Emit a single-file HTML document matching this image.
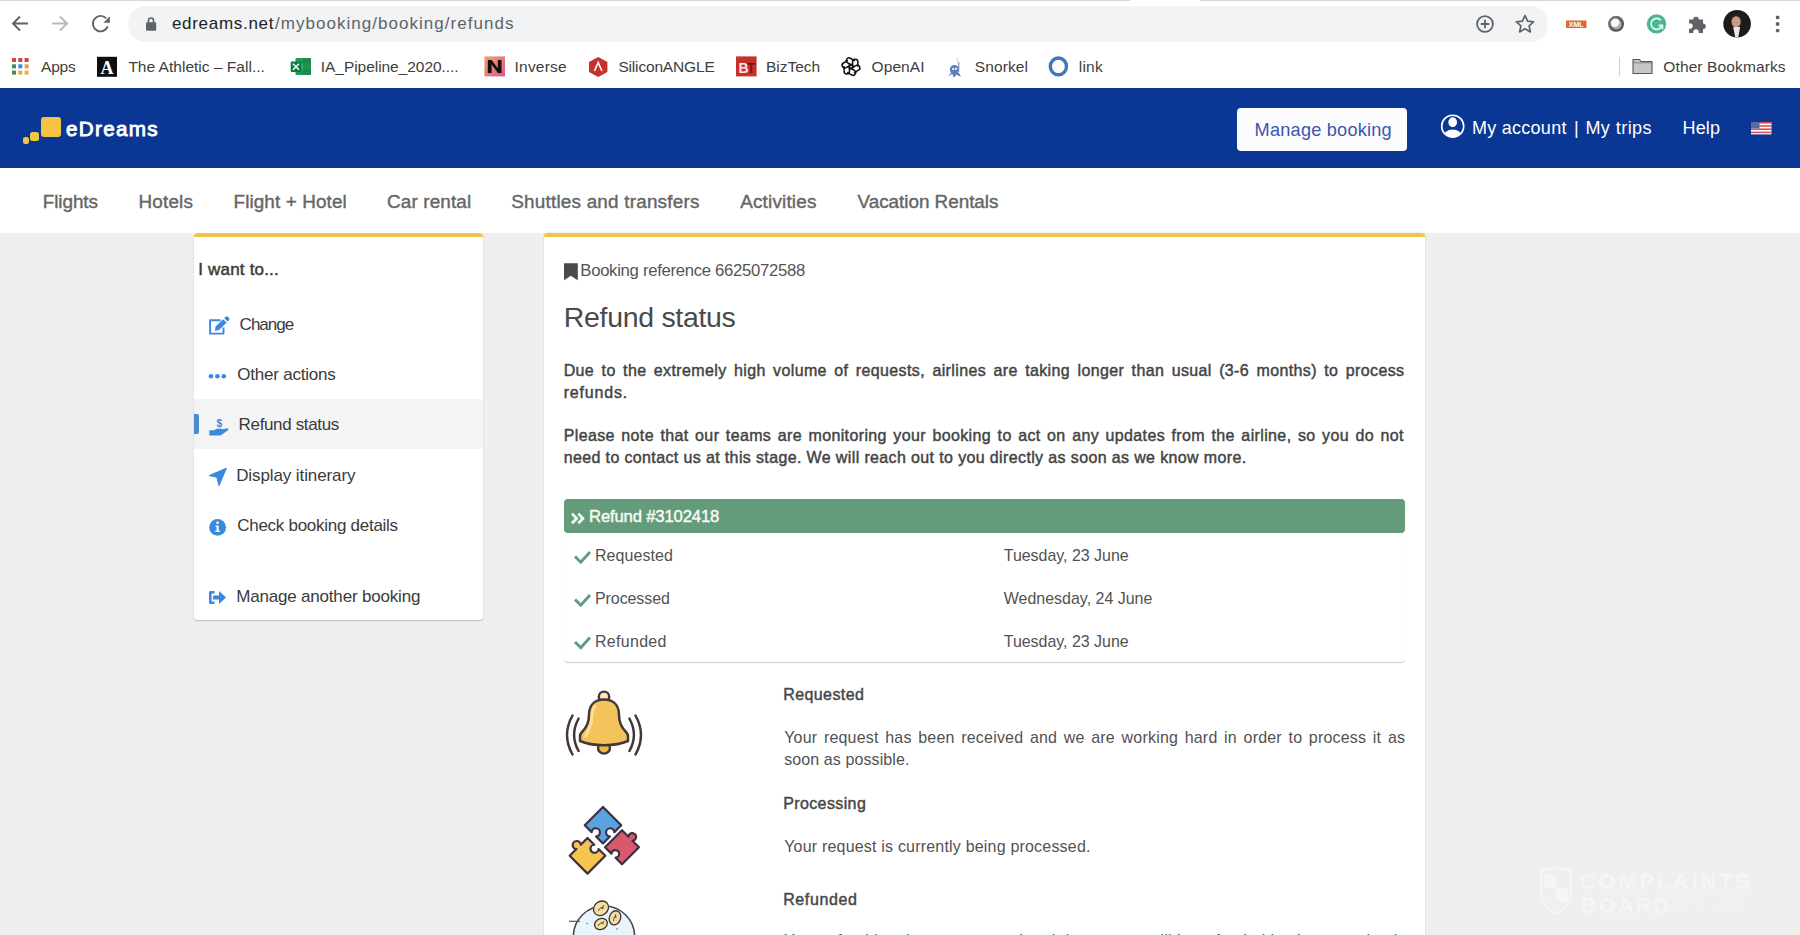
<!DOCTYPE html>
<html><head><meta charset="utf-8"><title>eDreams - Refund status</title>
<style>
html,body{margin:0;padding:0}
body{width:1800px;height:935px;overflow:hidden;position:relative;background:#efefef;font-family:"Liberation Sans",sans-serif}
.a{position:absolute}
.t{position:absolute;white-space:nowrap;font-family:"Liberation Sans",sans-serif}
svg{position:absolute;overflow:visible}
</style></head><body>
<!-- chrome toolbar -->
<div class="a" style="left:0;top:0;width:1800px;height:88px;background:#fff"></div>
<div class="a" style="left:0;top:0;width:1130px;height:1px;background:#d6d6d6"></div>
<div class="a" style="left:1200px;top:0;width:600px;height:1px;background:#d6d6d6"></div>
<div class="a" style="left:128px;top:6px;width:1420px;height:36px;border-radius:18px;background:#f1f3f4"></div>
<svg style="left:0;top:0" width="1800" height="88" viewBox="0 0 1800 88">
 <g fill="none" stroke="#5f6368" stroke-width="1.9" stroke-linecap="butt">
  <path d="M13 23.5H28M20 16.5L13 23.5L20 30.5"/>
  <path d="M52 23.5H67M60 16.5L67 23.5L60 30.5" stroke="#b6b9bc"/>
  <path d="M107.8 26.4A7.7 7.7 0 1 1 106.2 18.3"/>
 </g>
 <path d="M103.4 22.7L109.8 22.7L109.8 16.2Z" fill="#5f6368"/>
 <!-- lock -->
 <path d="M148.5 23V20.5A2.5 2.5 0 0 1 153.5 20.5V23" fill="none" stroke="#5f6368" stroke-width="1.6"/>
 <rect x="146" y="22.2" width="10.2" height="8.5" rx="1.3" fill="#5f6368"/>
 <!-- plus circle -->
 <circle cx="1485" cy="24" r="7.9" fill="none" stroke="#5f6368" stroke-width="1.8"/>
 <path d="M1485 19.8V28.2M1480.8 24H1489.2" stroke="#5f6368" stroke-width="1.8"/>
 <!-- star -->
 <path d="M1525 15.5L1527.6 21.2L1533.6 21.8L1529.1 25.9L1530.4 31.9L1525 28.8L1519.6 31.9L1520.9 25.9L1516.4 21.8L1522.4 21.2Z" fill="none" stroke="#5f6368" stroke-width="1.7" stroke-linejoin="round"/>
 <!-- xml badge -->
 <rect x="1566" y="20.5" width="20.5" height="7.5" fill="#e0682c"/>
 <text x="1576.2" y="27" font-family="Liberation Sans" font-size="7" font-weight="bold" fill="#fff" text-anchor="middle">XML</text>
 <!-- circle ext -->
 <defs><linearGradient id="cg" x1="0" y1="0" x2="1" y2="1"><stop offset="0" stop-color="#8a8a8a"/><stop offset="1" stop-color="#383838"/></linearGradient></defs>
 <circle cx="1616" cy="23.8" r="8" fill="url(#cg)"/>
 <circle cx="1616.6" cy="24.4" r="5.2" fill="#a8a8a8"/>
 <ellipse cx="1615.1" cy="22.8" rx="4.6" ry="4.1" transform="rotate(-35 1615.1 22.8)" fill="#f7f7f7"/>
 <!-- grammarly -->
 <circle cx="1656.5" cy="23.9" r="9.7" fill="#4db793"/>
 <path d="M1660.8 20.3A5.5 5.5 0 1 0 1661.6 26.2" fill="none" stroke="#e9fff6" stroke-width="1.6"/>
 <path d="M1658.6 25.4H1662.4V29.2" fill="none" stroke="#e9fff6" stroke-width="1.6"/>
 <!-- ext puzzle -->
 <path d="M1689 19.5H1693.2A2.8 2.8 0 1 1 1698.8 19.5H1703V23.5A2.8 2.8 0 1 1 1703 29.1V33H1698.6A2.8 2.8 0 1 0 1693.4 33H1689V28.6A2.8 2.8 0 1 0 1689 23.4Z" fill="#5f6368"/>
 <!-- avatar -->
 <circle cx="1737.1" cy="23.8" r="13.8" fill="#1d1a19"/>
 <path d="M1730.5 19Q1731 13.5 1736.5 13.5Q1742 13.5 1742.5 19L1742 26Q1739 24 1736 24Q1732 24 1730.8 26Z" fill="#2b1d19"/>
 <ellipse cx="1736.1" cy="21.8" rx="4.6" ry="5.6" fill="#c59c86"/>
 <path d="M1733.2 27H1740.2L1738.2 37.5H1735.2Z" fill="#e6e6ea"/>
 <!-- kebab -->
 <circle cx="1777.6" cy="17.4" r="1.9" fill="#5f6368"/><circle cx="1777.6" cy="24" r="1.9" fill="#5f6368"/><circle cx="1777.6" cy="30.6" r="1.9" fill="#5f6368"/>

 <!-- bookmarks -->
 <g>
  <rect x="12" y="58" width="4" height="4" fill="#d2463b"/><rect x="18.3" y="58" width="4" height="4" fill="#d2463b"/><rect x="24.6" y="58" width="4" height="4" fill="#d2463b"/>
  <rect x="12" y="64.3" width="4" height="4" fill="#3f8c57"/><rect x="18.3" y="64.3" width="4" height="4" fill="#3d85e0"/><rect x="24.6" y="64.3" width="4" height="4" fill="#e2a13e"/>
  <rect x="12" y="70.6" width="4" height="4" fill="#3f8c57"/><rect x="18.3" y="70.6" width="4" height="4" fill="#e8a83c"/><rect x="24.6" y="70.6" width="4" height="4" fill="#e3b544"/>
 </g>
 <rect x="97" y="56.8" width="20" height="20" fill="#0e0e0e"/>
 <text x="107" y="74.3" font-family="Liberation Serif" font-size="18" font-weight="bold" fill="#fff" text-anchor="middle">A</text>
 <!-- excel -->
 <rect x="295.5" y="58" width="15.5" height="17" rx="1" fill="#1f9b5a"/>
 <rect x="295.5" y="63.5" width="15.5" height="6" fill="#2db36c"/>
 <rect x="303" y="58" width="8" height="17" fill="#147a43" opacity="0.55"/>
 <rect x="290.7" y="61.5" width="10.5" height="10.5" rx="1" fill="#107c41"/>
 <path d="M293 63.8L299 69.7M299 63.8L293 69.7" stroke="#fff" stroke-width="1.4"/>
 <!-- N -->
 <defs><linearGradient id="ng" x1="0" y1="0" x2="1" y2="1"><stop offset="0" stop-color="#f3a16b"/><stop offset="1" stop-color="#e0578a"/></linearGradient></defs>
 <rect x="484.4" y="56.4" width="20.6" height="20" fill="url(#ng)"/>
 <path d="M487.8 73V60H491.6L497.8 68.3V60H501.5V73H497.9L491.6 64.6V73Z" fill="#111"/>
 <!-- siliconangle hex -->
 <path d="M598.2 57L607.4 62V72L598.2 77L589 72V62Z" fill="#c7302b"/>
 <path d="M594.5 71L598.2 62.5L601.9 71" fill="none" stroke="#fff" stroke-width="1.6"/>
 <!-- biztech -->
 <rect x="736" y="56.4" width="20.6" height="20" fill="#c8302c"/>
 <text x="738.5" y="72.5" font-family="Liberation Sans" font-size="14" font-weight="bold" fill="#fde8e6">B</text>
 <text x="746.8" y="72.5" font-family="Liberation Sans" font-size="14" font-weight="bold" fill="#7e1412">T</text>
 <!-- openai -->
 <g fill="none" stroke="#111" stroke-width="1.45" transform="translate(851,66.6) scale(1.03)">
  <path d="M1.5 3.2V-4.6A2.6 2.6 0 0 1 6.7 -4.6V0.5" transform="rotate(0)"/>
  <path d="M1.5 3.2V-4.6A2.6 2.6 0 0 1 6.7 -4.6V0.5" transform="rotate(60)"/>
  <path d="M1.5 3.2V-4.6A2.6 2.6 0 0 1 6.7 -4.6V0.5" transform="rotate(120)"/>
  <path d="M1.5 3.2V-4.6A2.6 2.6 0 0 1 6.7 -4.6V0.5" transform="rotate(180)"/>
  <path d="M1.5 3.2V-4.6A2.6 2.6 0 0 1 6.7 -4.6V0.5" transform="rotate(240)"/>
  <path d="M1.5 3.2V-4.6A2.6 2.6 0 0 1 6.7 -4.6V0.5" transform="rotate(300)"/>
 </g>
 <!-- snorkel -->
 <path d="M957.5 57.5V63" stroke="#d5dbe6" stroke-width="1.2"/>
 <path d="M958.8 62V72" stroke="#6a86b8" stroke-width="1"/>
 <path d="M951 73Q948.5 69 951 66.5Q954 64 957.5 66Q959.5 68.5 958 72Q960 74 961 76.5Q958 76 956.5 74.5Q955 77.5 953 77Q953.5 75 952 74Q950 76 947.5 75.5Q950 74.5 951 73Z" fill="#5d80c0"/>
 <circle cx="953.2" cy="69" r="1.1" fill="#fff"/><circle cx="956" cy="68.8" r="1.1" fill="#fff"/>
 <!-- link circle -->
 <ellipse cx="1058.4" cy="66.4" rx="8.1" ry="8.4" fill="none" stroke="#3b79b7" stroke-width="3.4"/>
 <!-- separator -->
 <rect x="1619" y="57" width="1" height="19" fill="#cfcfcf"/>
 <!-- folder -->
 <path d="M1633 59.5H1639.5L1641 61.5H1652V73.5H1633Z" fill="#c6c6c6" stroke="#555" stroke-width="1.1" stroke-linejoin="round"/>
 <path d="M1633 62.8H1652" stroke="#777" stroke-width="0.9"/>
</svg>

<!-- eDreams header -->
<div class="a" style="left:0;top:88px;width:1800px;height:80px;background:#0a3694"></div>
<div class="a" style="left:41px;top:117px;width:19.5px;height:19.5px;border-radius:3px;background:#f5c444"></div>
<div class="a" style="left:30px;top:132px;width:8.6px;height:8.6px;border-radius:2.5px;background:#f5c444"></div>
<div class="a" style="left:22.6px;top:137.4px;width:6.3px;height:6.3px;border-radius:2.2px;background:#f5c444"></div>
<div class="a" style="left:1237px;top:108px;width:170px;height:43px;border-radius:4px;background:#fcfcff"></div>
<svg style="left:0;top:88px" width="1800" height="80" viewBox="0 88 1800 80">
 <defs><clipPath id="uc"><circle cx="1452.7" cy="126.2" r="11"/></clipPath></defs>
 <circle cx="1452.7" cy="126.2" r="11" fill="none" stroke="#fff" stroke-width="1.6"/>
 <g clip-path="url(#uc)" fill="#fff">
  <ellipse cx="1452.7" cy="122.2" rx="4.3" ry="5"/>
  <ellipse cx="1452.7" cy="137.5" rx="9.5" ry="8"/>
 </g>
 <!-- flag -->
 <rect x="1751" y="122" width="20.4" height="12.4" fill="#fff"/>
 <g fill="#d6515a">
  <rect x="1751" y="122" width="20.4" height="1.6"/><rect x="1751" y="125.2" width="20.4" height="1.6"/><rect x="1751" y="128.4" width="20.4" height="1.6"/><rect x="1751" y="131.6" width="20.4" height="1.6"/>
 </g>
 <rect x="1751" y="122" width="8.5" height="6.4" fill="#5a6aa0"/>
</svg>

<!-- nav -->
<div class="a" style="left:0;top:168px;width:1800px;height:65px;background:#fff"></div>

<!-- sidebar card -->
<div class="a" style="left:194px;top:233px;width:289px;height:387px;background:#fff;border-radius:4px;box-shadow:0 1px 1.5px rgba(0,0,0,0.22)"></div>
<div class="a" style="left:194px;top:233px;width:289px;height:4px;background:#efc545;border-radius:4px 4px 0 0"></div>
<div class="a" style="left:194px;top:399px;width:289px;height:50px;background:#f4f4f4"></div>
<div class="a" style="left:194px;top:414px;width:4.8px;height:20px;background:#4b8bd0;border-radius:0 2px 2px 0"></div>
<svg style="left:194px;top:233px" width="289" height="387" viewBox="194 233 289 387">
 <!-- change -->
 <path d="M220.6 320.3H210.1V333.6H223.5V327.6" fill="none" stroke="#3a88e0" stroke-width="1.9" stroke-linejoin="round"/>
 <path d="M214.9 330.9L215.6 326.6L223.1 319.2L226.6 322.6L219.1 330.1Z" fill="#3a88e0"/>
 <path d="M224.2 318.2L225.7 316.8Q226.8 315.9 227.8 316.8L229 317.9Q229.9 318.9 229 319.9L227.6 321.4Z" fill="#3a88e0"/>
 <!-- dots -->
 <circle cx="211" cy="376.3" r="2.3" fill="#3a88e0"/><circle cx="217.4" cy="376.3" r="2.3" fill="#3a88e0"/><circle cx="223.8" cy="376.3" r="2.3" fill="#3a88e0"/>
 <!-- refund hand -->
 <text x="219.3" y="427" font-family="Liberation Sans" font-size="10" font-weight="bold" fill="#3a88e0" text-anchor="middle">$</text>
 <path d="M209.3 430.2H214.5Q216 428.6 218 428.8H222.5Q223.5 429.8 222 430.8H218.2L227 428.3Q229.2 428.5 228 430.3L220.5 435.5H209.3Z" fill="#3a88e0"/>
 <!-- plane -->
 <path d="M226.4 468.2L209.2 475.6L216.8 477.2L219 485.6Z" fill="#3a88e0" stroke="#3a88e0" stroke-width="1" stroke-linejoin="round"/>
 <!-- info -->
 <circle cx="217.6" cy="527.4" r="8.4" fill="#3a88e0"/>
 <circle cx="217.6" cy="522.8" r="1.3" fill="#fff"/>
 <path d="M215.6 525.4H218.6V530.6H219.8V532H215.4V530.6H216.6V526.8H215.6Z" fill="#fff"/>
 <!-- exit -->
 <path d="M214.5 592.3H210.3V602.7H214.5" fill="none" stroke="#3a88e0" stroke-width="2.6" stroke-linejoin="round"/>
 <path d="M213 595.6H219V591L226 597.5L219 604V599.4H213Z" fill="#3a88e0"/>
</svg>

<!-- main card -->
<div class="a" style="left:544px;top:233px;width:881px;height:720px;background:#fff;border-radius:4px;box-shadow:0 0 1.5px rgba(0,0,0,0.25)"></div>
<div class="a" style="left:544px;top:233px;width:881px;height:4px;background:#efc545;border-radius:4px 4px 0 0"></div>
<div class="a" style="left:564px;top:533px;width:841px;height:129px;background:#fff;border-radius:0 0 4px 4px;box-shadow:0 1px 0.8px rgba(0,0,0,0.2), 0 0 0.6px rgba(0,0,0,0.05)"></div>
<div class="a" style="left:564px;top:498.5px;width:841px;height:34.5px;background:#649b7a;border-radius:4px"></div>
<svg style="left:544px;top:237px" width="881" height="698" viewBox="544 237 881 698">
 <!-- bookmark -->
 <path d="M564 263.3H577.8V280.3L570.9 275.8L564 280.3Z" fill="#4a4a4a"/>
 <!-- chevrons -->
 <path d="M572 513.6L576.6 518.4L572 523.2M578.3 513.6L582.9 518.4L578.3 523.2" fill="none" stroke="#effcf2" stroke-width="2.8"/>
 <!-- checks -->
 <g fill="none" stroke="#5e9e85" stroke-width="3">
  <path d="M575 556.5L580.8 562.2L590 552"/>
  <path d="M575 599.5L580.8 605.2L590 595"/>
  <path d="M575 642L580.8 647.7L590 637.5"/>
 </g>
 <!-- bell -->
 <g stroke="#433838" stroke-width="2.5" fill="none" stroke-linecap="round">
  <path d="M572.5 715.5Q561.5 735 572.5 754.5"/>
  <path d="M578.6 718.5Q569.6 735 578.6 751"/>
  <path d="M635.5 715.5Q646.5 735 635.5 754.5"/>
  <path d="M629.4 718.5Q638.4 735 629.4 751"/>
 </g>
 <ellipse cx="604" cy="748" rx="6" ry="5.6" fill="#f4b743" stroke="#433838" stroke-width="2.4"/>
 <circle cx="604" cy="696.8" r="5.2" fill="#fde7bd" stroke="#433838" stroke-width="2.4"/>
 <path d="M604 699.5C592 699.5 589 708 589 715C589 722 587 727 582 732C580.5 733.5 580 735 580 736.5V741C592 746.5 616 746.5 628 741V736.5C628 735 627.5 733.5 626 732C621 727 619 722 619 715C619 708 616 699.5 604 699.5Z" fill="#f4c35a" stroke="#433838" stroke-width="2.5" stroke-linejoin="round"/>
 <path d="M595.5 705Q591 712 591.5 722Q589 730 585 737" fill="none" stroke="#fde3a0" stroke-width="2.8" opacity="0.9"/>
 <!-- jigsaw -->
 <g stroke="#3b3145" stroke-width="2.2" stroke-linejoin="round">
  <path d="M603.00 806.96L621.24 825.20L614.31 832.13A4.13 4.13 0 1 0 609.93 836.51L603.00 843.44L596.07 836.51A4.13 4.13 0 1 0 591.69 832.13L584.76 825.20L603.00 806.96Z" fill="#5aa3e0"/>
  <path d="M622.00 830.23L628.45 836.68A3.84 3.84 0 1 1 632.52 840.75L638.97 847.20L622.00 864.17L615.55 857.72A3.84 3.84 0 1 0 611.48 853.65L605.03 847.20L622.00 830.23Z" fill="#d8596b"/>
  <path d="M587.50 837.98L594.27 844.75A4.03 4.03 0 1 0 598.55 849.03L605.32 855.80L587.50 873.62L569.68 855.80L576.45 849.03A4.03 4.03 0 1 1 580.73 844.75L587.50 837.98Z" fill="#f5c350"/>
 </g>
 <!-- coins bowl -->
 <circle cx="604" cy="936.7" r="30.7" fill="#eaf5fb" stroke="#4a4a4a" stroke-width="1.6"/>
 <path d="M569 921.3H580" stroke="#555" stroke-width="1.2"/>
 <circle cx="587" cy="923.5" r="0.8" fill="#5a7080"/><circle cx="617" cy="929" r="0.8" fill="#5a7080"/>
 <g stroke="#3c3433" stroke-width="1.3">
  <ellipse cx="601" cy="908.3" rx="6.8" ry="8" transform="rotate(50 601 908.3)" fill="#f2dfa4"/>
  <ellipse cx="615" cy="917.8" rx="5.6" ry="7.2" transform="rotate(20 615 917.8)" fill="#f2dfa4"/>
  <ellipse cx="601" cy="924" rx="5.4" ry="6.6" transform="rotate(65 601 924)" fill="#f2dfa4"/>
 </g>
 <g stroke="#5a4a30" stroke-width="1" fill="none">
  <path d="M598 911Q601 906 603.5 908Q600 911 604 905"/>
  <path d="M613.5 921Q614 915 616.5 917Q614 919 616 914"/>
  <path d="M598 926Q601 921 603.5 923.5Q600.5 925 604 921"/>
 </g>
</svg>
<!-- watermark -->
<svg style="left:1530px;top:865px" width="240" height="60" viewBox="1530 865 240 60">
 <path d="M1541 870.5Q1556 866 1571 870.5V895Q1568 908 1556 914Q1544 908 1541 895Z" fill="none" stroke="#f6f6f6" stroke-width="2"/>
 <rect x="1544" y="874" width="12" height="14" fill="#f5f5f5"/><rect x="1556" y="888" width="12" height="14" fill="#f5f5f5"/>
 <text x="1580" y="889" font-family="Liberation Sans" font-size="22" font-weight="bold" fill="#f5f5f5" textLength="170">COMPLAINTS</text>
 <text x="1581" y="913" font-family="Liberation Sans" font-size="22" font-weight="bold" fill="#f5f5f5" textLength="88">BOARD</text>
 <text x="1670" y="900" font-family="Liberation Sans" font-size="7" fill="#f5f5f5" textLength="75">HERE FOR</text>
 <text x="1670" y="911" font-family="Liberation Sans" font-size="7" fill="#f5f5f5" textLength="75">PEOPLE</text>
</svg>
<div class="t" style="left:171.90px;top:13.71px;font-size:17px;line-height:20px;color:#202124;letter-spacing:0.703px;">edreams.net</div>
<div class="t" style="left:275.00px;top:13.71px;font-size:17px;line-height:20px;color:#5f6368;letter-spacing:1.035px;">/mybooking/booking/refunds</div>
<div class="t" style="left:41.00px;top:57.13px;font-size:15.5px;line-height:19px;color:#3d3d3d;letter-spacing:-0.193px;">Apps</div>
<div class="t" style="left:128.40px;top:57.13px;font-size:15.5px;line-height:19px;color:#3d3d3d;letter-spacing:0.016px;">The Athletic – Fall...</div>
<div class="t" style="left:320.80px;top:57.13px;font-size:15.5px;line-height:19px;color:#3d3d3d;letter-spacing:-0.049px;">IA_Pipeline_2020....</div>
<div class="t" style="left:514.60px;top:57.13px;font-size:15.5px;line-height:19px;color:#3d3d3d;letter-spacing:0.199px;">Inverse</div>
<div class="t" style="left:618.40px;top:57.13px;font-size:15.5px;line-height:19px;color:#3d3d3d;letter-spacing:-0.170px;">SiliconANGLE</div>
<div class="t" style="left:766.00px;top:57.13px;font-size:15.5px;line-height:19px;color:#3d3d3d;letter-spacing:-0.009px;">BizTech</div>
<div class="t" style="left:871.60px;top:57.13px;font-size:15.5px;line-height:19px;color:#3d3d3d;letter-spacing:0.069px;">OpenAI</div>
<div class="t" style="left:974.80px;top:57.13px;font-size:15.5px;line-height:19px;color:#3d3d3d;letter-spacing:0.115px;">Snorkel</div>
<div class="t" style="left:1078.70px;top:57.13px;font-size:15.5px;line-height:19px;color:#3d3d3d;letter-spacing:0.264px;">link</div>
<div class="t" style="left:1663.30px;top:57.13px;font-size:15.5px;line-height:19px;color:#3d3d3d;letter-spacing:0.118px;">Other Bookmarks</div>
<div class="t" style="left:66.10px;top:116.45px;font-size:20.64px;line-height:25px;-webkit-text-stroke:0.45px #fff;color:#fff;letter-spacing:1.291px;-webkit-text-stroke:0.9px #fff;">eDreams</div>
<div class="t" style="left:1254.60px;top:118.50px;font-size:18.17px;line-height:22px;color:#3a56ab;letter-spacing:0.219px;">Manage booking</div>
<div class="t" style="left:1472.00px;top:117.16px;font-size:18.02px;line-height:22px;color:#fff;letter-spacing:0.254px;">My account</div>
<div class="t" style="left:1574.00px;top:117.16px;font-size:18.02px;line-height:22px;color:#fff;letter-spacing:0.000px;">|</div>
<div class="t" style="left:1585.40px;top:117.16px;font-size:18.02px;line-height:22px;color:#fff;letter-spacing:0.450px;">My trips</div>
<div class="t" style="left:1682.60px;top:117.16px;font-size:18.02px;line-height:22px;color:#fff;letter-spacing:0.123px;">Help</div>
<div class="t" style="left:42.75px;top:190.45px;font-size:18.9px;line-height:23px;-webkit-text-stroke:0.45px #666;color:#666;letter-spacing:-0.074px;-webkit-text-stroke:0.4px #666;">Flights</div>
<div class="t" style="left:138.50px;top:190.45px;font-size:18.9px;line-height:23px;-webkit-text-stroke:0.45px #666;color:#666;letter-spacing:0.180px;-webkit-text-stroke:0.4px #666;">Hotels</div>
<div class="t" style="left:233.50px;top:190.45px;font-size:18.9px;line-height:23px;-webkit-text-stroke:0.45px #666;color:#666;letter-spacing:0.106px;-webkit-text-stroke:0.4px #666;">Flight + Hotel</div>
<div class="t" style="left:387.00px;top:190.45px;font-size:18.9px;line-height:23px;-webkit-text-stroke:0.45px #666;color:#666;letter-spacing:0.139px;-webkit-text-stroke:0.4px #666;">Car rental</div>
<div class="t" style="left:511.30px;top:190.45px;font-size:18.9px;line-height:23px;-webkit-text-stroke:0.45px #666;color:#666;letter-spacing:0.204px;-webkit-text-stroke:0.4px #666;">Shuttles and transfers</div>
<div class="t" style="left:740.20px;top:190.45px;font-size:18.9px;line-height:23px;-webkit-text-stroke:0.45px #666;color:#666;letter-spacing:0.180px;-webkit-text-stroke:0.4px #666;">Activities</div>
<div class="t" style="left:857.50px;top:190.45px;font-size:18.9px;line-height:23px;-webkit-text-stroke:0.45px #666;color:#666;letter-spacing:-0.031px;-webkit-text-stroke:0.4px #666;">Vacation Rentals</div>
<div class="t" style="left:198.30px;top:259.61px;font-size:17.01px;line-height:20px;-webkit-text-stroke:0.45px #3a3a3a;color:#3a3a3a;letter-spacing:0.182px;">I want to...</div>
<div class="t" style="left:239.60px;top:315.11px;font-size:17.01px;line-height:20px;color:#3a3a3a;letter-spacing:-0.979px;">Change</div>
<div class="t" style="left:237.30px;top:364.81px;font-size:17.01px;line-height:20px;color:#3a3a3a;letter-spacing:-0.217px;">Other actions</div>
<div class="t" style="left:238.60px;top:415.41px;font-size:17.01px;line-height:20px;color:#3a3a3a;letter-spacing:-0.350px;">Refund status</div>
<div class="t" style="left:236.20px;top:465.81px;font-size:17.01px;line-height:20px;color:#3a3a3a;letter-spacing:-0.102px;">Display itinerary</div>
<div class="t" style="left:237.20px;top:515.81px;font-size:17.01px;line-height:20px;color:#3a3a3a;letter-spacing:-0.271px;">Check booking details</div>
<div class="t" style="left:236.20px;top:586.81px;font-size:17.01px;line-height:20px;color:#3a3a3a;letter-spacing:-0.187px;">Manage another booking</div>
<div class="t" style="left:580.30px;top:260.91px;font-size:16.72px;line-height:20px;color:#555;letter-spacing:-0.300px;">Booking reference 6625072588</div>
<div class="t" style="left:563.80px;top:300.43px;font-size:28.49px;line-height:34px;color:#4a4a4a;letter-spacing:-0.310px;">Refund status</div>
<div class="t" style="left:563.70px;top:360.76px;font-size:15.99px;line-height:19px;-webkit-text-stroke:0.45px #444;color:#444;letter-spacing:0.376px;word-spacing:2.612px;">Due to the extremely high volume of requests, airlines are taking longer than usual (3-6 months) to process</div>
<div class="t" style="left:563.70px;top:383.46px;font-size:15.99px;line-height:19px;-webkit-text-stroke:0.45px #444;color:#444;letter-spacing:0.812px;">refunds.</div>
<div class="t" style="left:563.70px;top:425.96px;font-size:15.99px;line-height:19px;-webkit-text-stroke:0.45px #444;color:#444;letter-spacing:0.376px;word-spacing:1.682px;">Please note that our teams are monitoring your booking to act on any updates from the airline, so you do not</div>
<div class="t" style="left:563.70px;top:448.36px;font-size:15.99px;line-height:19px;-webkit-text-stroke:0.45px #444;color:#444;letter-spacing:0.376px;">need to contact us at this stage. We will reach out to you directly as soon as we know more.</div>
<div class="t" style="left:589.00px;top:507.21px;font-size:16.72px;line-height:20px;-webkit-text-stroke:0.45px #f4fbf4;color:#f4fbf4;letter-spacing:-0.181px;">Refund #3102418</div>
<div class="t" style="left:595.00px;top:546.46px;font-size:15.99px;line-height:19px;color:#525252;letter-spacing:0.072px;">Requested</div>
<div class="t" style="left:595.00px;top:589.26px;font-size:15.99px;line-height:19px;color:#525252;letter-spacing:-0.079px;">Processed</div>
<div class="t" style="left:595.00px;top:632.46px;font-size:15.99px;line-height:19px;color:#525252;letter-spacing:0.295px;">Refunded</div>
<div class="t" style="left:1003.75px;top:546.46px;font-size:15.99px;line-height:19px;color:#525252;letter-spacing:-0.027px;">Tuesday, 23 June</div>
<div class="t" style="left:1003.75px;top:589.26px;font-size:15.99px;line-height:19px;color:#525252;letter-spacing:-0.003px;">Wednesday, 24 June</div>
<div class="t" style="left:1003.75px;top:632.46px;font-size:15.99px;line-height:19px;color:#525252;letter-spacing:-0.027px;">Tuesday, 23 June</div>
<div class="t" style="left:783.20px;top:685.46px;font-size:15.99px;line-height:19px;-webkit-text-stroke:0.45px #474747;color:#474747;letter-spacing:0.422px;">Requested</div>
<div class="t" style="left:784.20px;top:727.96px;font-size:15.99px;line-height:19px;color:#525252;letter-spacing:0.202px;word-spacing:1.976px;">Your request has been received and we are working hard in order to process it as</div>
<div class="t" style="left:784.20px;top:750.06px;font-size:15.99px;line-height:19px;color:#525252;letter-spacing:0.108px;">soon as possible.</div>
<div class="t" style="left:783.20px;top:793.96px;font-size:15.99px;line-height:19px;-webkit-text-stroke:0.45px #474747;color:#474747;letter-spacing:0.391px;">Processing</div>
<div class="t" style="left:784.20px;top:836.76px;font-size:15.99px;line-height:19px;color:#525252;letter-spacing:0.202px;">Your request is currently being processed.</div>
<div class="t" style="left:783.20px;top:889.66px;font-size:15.99px;line-height:19px;-webkit-text-stroke:0.45px #474747;color:#474747;letter-spacing:0.624px;">Refunded</div>
<div class="t" style="left:784.20px;top:930.96px;font-size:15.99px;line-height:19px;color:#525252;letter-spacing:0.202px;word-spacing:0.616px;">Your refund has been processed and the amount will be refunded back to your bank.</div>
</body></html>
